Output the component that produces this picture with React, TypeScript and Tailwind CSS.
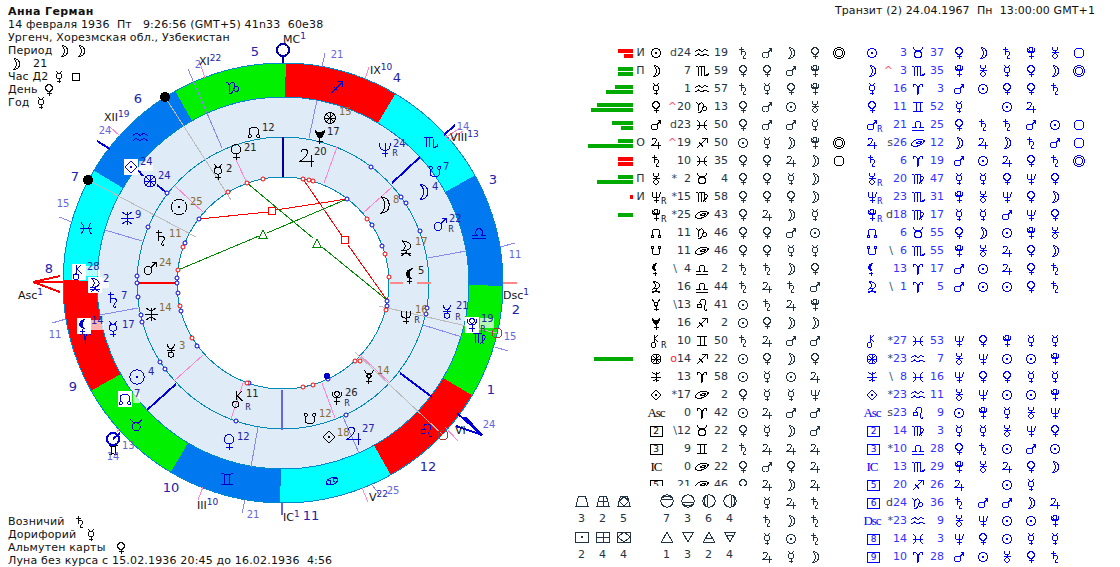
import React from 'react';

// glyph paths in a 16x16 box. c = circles [cx,cy,r], d = stroke path, f = filled path
type Gl = { d?: string; c?: number[][]; f?: string };
const G: Record<string, Gl> = {
  sun: { c: [[8, 8, 4.5]], f: 'M7.3 7.3h1.4v1.4h-1.4z' },
  moo: { d: 'M6 2.5C10 3 11.5 5.5 11.5 8C11.5 10.5 10 13 6 13.5C8 11.5 8.5 9.5 8.5 8C8.5 6.5 8 4.5 6 2.5' },
  mer: { c: [[8, 7, 2.7]], d: 'M5 2C5.8 3.5 6.5 4.3 8 4.3C9.5 4.3 10.2 3.5 11 2M8 9.7V14M6 12H10' },
  ven: { c: [[8, 6, 3.3]], d: 'M8 9.3V14M5.5 11.8H10.5' },
  mar: { c: [[6.5, 10, 3]], d: 'M8.7 7.8L12.5 4M9.5 3.5H12.8V7' },
  jup: { d: 'M4.5 5C4.5 2.8 8 2 8.3 5C8.5 7 6 9 4 10.5H12.5M10.5 7V14' },
  sat: { d: 'M6 2V10M4 4H8.5M6 8C7 6 10.5 6 10.5 8.5C10.5 10.5 8.5 11 8.5 12.5C8.5 13.5 9.5 14 10.5 13' },
  ura: { c: [[8, 11, 2.2]], d: 'M5 2.5C5.5 5 6.5 6 8 6C9.5 6 10.5 5 11 2.5M4.5 7.5H11.5M8 6V9' },
  nep: { d: 'M4 3V5C4 8 6 9 8 9C10 9 12 8 12 5V3M8 3V14M5.5 11.5H10.5' },
  plu: { c: [[8, 4.5, 2]], d: 'M4 3C4 6.5 6 8 8 8C10 8 12 6.5 12 3M8 8V14M5.5 11H10.5' },
  nod: { c: [[4.5, 11.5, 1.3], [11.5, 11.5, 1.3]], d: 'M5.2 10.4C3 8 3.5 4 8 4C12.5 4 13 8 10.8 10.4' },
  sno: { c: [[4.5, 4.5, 1.3], [11.5, 4.5, 1.3]], d: 'M5.2 5.6C3 8 3.5 12 8 12C12.5 12 13 8 10.8 5.6' },
  lil: { f: 'M9.5 2C6 2 4 4.5 4 6.5C4 9 6 10.5 9.5 10.5C8 9.5 7 8.2 7 6.5C7 4.8 8 3 9.5 2Z', d: 'M7 10.5V14.5M5 12.5H9' },
  sel: { d: 'M5 2.5C9 2.5 11.5 4.5 11.5 6.5C11.5 8.5 9 10 5 10C7 8.5 7.5 7.5 7.5 6.5C7.5 5 7 4 5 2.5M8 10V11M4 12H12M4.5 14L8 11L11.5 14' },
  me2: { d: 'M4.5 2.5C5 5 6.5 5.5 8 5.5C9.5 5.5 11 5 11.5 2.5M8 5.5L5.8 7L8 9.5L10.2 7L8 5.5M8 9.5V14M5.5 12H10.5' },
  bli: { f: 'M4 3C6 4.5 7 5 8 5C9 5 10 4.5 12 3C12 6 11 9 8 10C5 9 4 6 4 3Z', d: 'M8 10V14.5M5.5 12.5H10.5' },
  chi: { c: [[5.5, 12, 2.4]], d: 'M6 2V9M6 6L10 2M6.5 5.5L10.5 9.5' },
  for: { c: [[8, 8, 5]], d: 'M4.8 4.8L11.2 11.2M11.2 4.8L4.8 11.2M8 3V13M3 8H13' },
  ast: { d: 'M3 8H13M4.5 3.5C7 6 9 6 11.5 3.5M4.5 12.5C7 10 9 10 11.5 12.5M8 3V13' },
  dia: { d: 'M8 3L13 8L8 13L3 8Z', f: 'M7.4 7.4h1.2v1.2h-1.2z' },
  cir: { c: [[8, 8, 5]] },
  dbl: { c: [[8, 8, 5.5], [8, 8, 3.5]] },
  ari: { d: 'M8 13.5C8 8 7 3 4.5 3C3 3 3 5 4 6M8 13.5C8 8 9 3 11.5 3C13 3 13 5 12 6' },
  tau: { c: [[8, 9.5, 3.5]], d: 'M3 2.5C4 5 6 6 8 6C10 6 12 5 13 2.5' },
  gem: { d: 'M3 3C6 4 10 4 13 3M3 13C6 12 10 12 13 13M6 3.8V12.2M10 3.8V12.2' },
  can: { d: 'M1.5 9C4 5 9 3.5 14.5 5.5C13 10 7 12.5 1.5 10.5ZM6 8.5C8 6.5 10 6 11.5 7C10 9 8 9.5 6 8.5' },
  ca2: { c: [[5, 9, 1.8], [11, 7, 1.8]], d: 'M3.2 8.5C4 5.5 9 4 13 5.5M12.8 7.5C12 10.5 7 12 3 10.5' },
  leo: { c: [[5.5, 9, 2]], d: 'M6.8 7.5C5 5 6 2.5 9 2.5C12 2.5 12.5 5 11.5 7C10.5 9 10 11 10.5 12.5C11 13.7 12.5 13.7 13 12.5' },
  vir: { d: 'M2.5 4C3.5 3 4.5 3.5 4.5 5V12.5M4.5 5C5.5 3 7.5 3 7.5 5V12.5M7.5 5C8.5 3 10.5 3 10.5 5V10C10.5 12 11.5 13 12.5 13.5M10.5 6C12.5 4 14 6 13 8C12.5 9.5 11 11 9 12.5' },
  lib: { d: 'M2 13H14M2 10H6C4.5 8.5 4.5 4 8 4C11.5 4 11.5 8.5 10 10H14' },
  sco: { d: 'M2.5 4C3.5 3 4.5 3.5 4.5 5V12.5M4.5 5C5.5 3 7.5 3 7.5 5V12.5M7.5 5C8.5 3 10.5 3 10.5 5V11C10.5 13 12 13.5 14 11.5M14 9.5V11.5H12' },
  sag: { d: 'M3 13L13 3M8 3H13V8M5 7.5L9 11.5' },
  cap: { d: 'M2 4C3.5 3.5 4.5 5 4.5 7V12M4.5 7C5 4 8 3 9 5C9.5 6.5 9 9 8 11C7 13 5.5 14 4 14M9 8.5C10 7 13 7 13 9.5C13 12 10 12 8.5 10.5' },
  aqr: { d: 'M1.5 6.5L4.5 4.5L8 6.5L11 4.5L14.5 6.5M1.5 11L4.5 9L8 11L11 9L14.5 11' },
  pis: { d: 'M3.5 3C6.5 6 6.5 10 3.5 13M12.5 3C9.5 6 9.5 10 12.5 13M3 8H13' },
  tr1: { d: 'M2 13L4.5 3.5H11.5L14 13Z' },
  tr2: { d: 'M2 13L4.5 3.5H11.5L14 13ZM8 3.5V13M3.2 8.5H12.8' },
  tr3: { d: 'M2 13L4.5 3.5H11.5L14 13ZM8 3.5L12.8 8.5L8 13L3.2 8.5Z' },
  sq1: { d: 'M1.5 3H14.5V13H1.5Z', f: 'M7.4 7.4h1.2v1.2h-1.2z' },
  sq2: { d: 'M1.5 3H14.5V13H1.5ZM8 3V13M1.5 8H14.5' },
  sq3: { d: 'M1.5 3H14.5V13H1.5ZM8 3L14.5 8L8 13L1.5 8Z' },
  ci1: { c: [[8, 8, 6.2]], d: 'M2.5 6.5H13.5M4 4.5C6 3 10 3 12 4.5' },
  ci2: { c: [[8, 8, 6.2]], d: 'M2.5 9.5H13.5M4 11.5C6 13 10 13 12 11.5' },
  ci3: { c: [[8, 8, 6.2]], d: 'M6.5 2.5V13.5M4.5 4C3 6 3 10 4.5 12' },
  ci4: { c: [[8, 8, 6.2]], d: 'M9.5 2.5V13.5M11.5 4C13 6 13 10 11.5 12' },
  tu1: { d: 'M8 3L13.5 13H2.5Z' },
  td1: { d: 'M2.5 3H13.5L8 13Z' },
  tu2: { d: 'M8 3L13.5 13H2.5ZM5 9.5H11' },
  td2: { d: 'M2.5 3H13.5L8 13ZM5 6.5H11' },
};

function GPaths({ n }: { n: string }) {
  const g = G[n];
  return (
    <>
      {g.c?.map((c, i) => <circle key={i} cx={c[0]} cy={c[1]} r={c[2]} fill="none" stroke="currentColor" vectorEffect="non-scaling-stroke" />)}
      {g.d && <path d={g.d} fill="none" stroke="currentColor" vectorEffect="non-scaling-stroke" />}
      {g.f && <path d={g.f} fill="currentColor" />}
    </>
  );
}

function Ic({ n, s = 16 }: { n: string; s?: number }) {
  return (
    <svg width={s} height={s} viewBox="0 0 16 16" shapeRendering="crispEdges" className="shrink-0 inline-block">
      <GPaths n={n} />
    </svg>
  );
}

function Sym({ n }: { n: string }) {
  if (n === 'Asc' || n === 'Dsc' || n === 'IC')
    return <span className="text-[13px] tracking-[-1px] w-[16px] flex justify-center whitespace-nowrap font-['Liberation_Serif',serif]">{n}</span>;
  if (/^\d$/.test(n))
    return <span className="w-[13px] h-[11px] border border-current flex items-center justify-center text-[9px] leading-none">{n}</span>;
  if (n.endsWith('R'))
    return (
      <span className="relative flex">
        <Ic n={n.slice(0, 3)} />
        <span className="absolute left-[13px] top-[8px] text-[8px] leading-[9px]">R</span>
      </span>
    );
  return <Ic n={n} />;
}

const LEFT = [
  'sun|d|24|aqr|19|sat mar moo ven|dbl',
  'moo||7|sco|59|ven ven mar plu|',
  'mer||1|aqr|57|sat mer ven plu|',
  'ven|^|20|cap|13|ven mar sun ura|',
  'mar|d|23|pis|50|ven mar mar mer|',
  'jup|^|19|sag|50|sun mer moo plu|dbl',
  'sat||10|pis|35|ven ven jup moo|cir',
  'ura|*|2|tau|4|ven ven mer moo|',
  'nepR|*|15|vir|58|ven ven ven moo|',
  'pluR|*|25|can|43|ven jup moo mer|',
  'nod||11|cap|46|ven ven mar sun|',
  'sno||11|can|46|ven ven mer mer|',
  'lil|\\|4|lib|2|sat sat moo ven|',
  'sel||16|lib|44|sat jup sat mar|',
  'me2|\\|13|leo|41|sun sat jup plu|',
  'bli||16|sag|2|sun ven moo moo|',
  'chiR||10|gem|50|sat jup mar mar|',
  'for|o|14|sag|22|sun ven moo ven|',
  'ast||13|ari|58|sun mer sun jup|',
  'dia|*|17|can|2|ven mer mer nep|',
  'Asc||0|ari|42|sun jup mar mar|',
  '2|\\|12|tau|22|ven mer moo mar|',
  '3||9|gem|2|sat jup jup jup|',
  'IC||0|can|22|ven mar ven jup|',
  '5||21|can|46|ven jup moo jup|',
  '|||||_ mer jup sat|',
  '|||||_ sat moo sat|',
  '|||||_ mer sun sat|',
  '|||||_ jup mer moo|',
];

const RIGHT = [
  'sun||3|tau|37|ven moo sat plu ura cir',
  'moo|^|3|sco|35|plu ura mer ven moo dbl',
  'mer||16|ari|3|mar sun ven ven sat',
  'ven||11|gem|52|mer _ sun jup',
  'marR||21|lib|25|ven sat sat mar sun cir',
  'jup|s|26|can|12|moo jup moo sat mar cir',
  'sat||6|ari|19|mar sun jup ven sat dbl',
  'uraR||20|vir|47|mer mer ven nep ven',
  'nepR||23|sco|31|plu ura nep ven moo',
  'pluR|d|18|vir|17|mer mer mar nep ven',
  'nod||6|tau|55|ven moo sun plu ura',
  'sno|\\|6|sco|55|plu ura jup ven moo',
  'lil||13|ari|17|mar sun jup ven sat',
  'sel|\\|1|ari|5|mar sun sun ven sat',
  '|||||',
  '|||||',
  'chi|*|27|pis|53|nep ven plu mer mer',
  'for|*|23|aqr|7|ura nep sun sun plu',
  'ast|\\|8|pis|16|nep ven ven mer mer',
  'dia|*|23|aqr|11|ura nep sun sun plu',
  'Asc|s|23|leo|9|sun plu mer ura nep',
  '2||14|vir|3|mer mer ura nep ven',
  '3|*|10|lib|28|ven sat sun mar sun',
  'IC||13|sco|29|plu ura jup ven moo',
  '5||20|sag|26|jup _ sun mer',
  '6|d|24|cap|36|sat mar mar moo jup',
  'Dsc|*|23|aqr|9|ura nep sun sun plu',
  '8||14|pis|3|nep ven sun mer mer',
  '9||10|ari|28|mar sun ura ven sat',
];

// strength bars next to the left table: [top width, bottom width, colour, label]
const BARS: Record<number, [number, number, string, string]> = {
  0: [15, 9, '#ff0000', 'И'],
  1: [15, 15, '#00aa00', 'П'],
  2: [18, 27, '#00aa00', ''],
  3: [36, 42, '#00aa00', ''],
  4: [21, 12, '#00aa00', ''],
  5: [15, 45, '#00aa00', 'О'],
  6: [15, 15, '#ff0000', ''],
  7: [15, 36, '#00aa00', 'П'],
  8: [3, 0, '#ff0000', 'И'],
  9: [0, 15, '#00aa00', ''],
  17: [39, 0, '#00aa00', ''],
};

const markCol: Record<string, string> = { '^': 'text-[#ff5577]', o: 'text-[#ff2233]', d: 'text-[#444444]', s: 'text-[#444444]', '*': 'text-[#334466]', '\\': 'text-[#335577]' };

function Rulers({ list }: { list: string[] }) {
  return (
    <>
      {list.map((r, i) => (
        <span key={i} className="flex justify-center">{r && r !== '_' ? <Ic n={r} /> : null}</span>
      ))}
    </>
  );
}

function LeftTable() {
  return (
    <div className="grid grid-cols-[63px_15px_16px_13px_14px_21px_19px_repeat(5,24px)] auto-rows-[18px] items-center text-[#223344] text-[11px] leading-[18px]">
      {LEFT.map((row, i) => {
        const [pl, mk, deg, sign, min, rul, ext] = row.split('|');
        const b = BARS[i];
        const rulers = rul.split(' ');
        return (
          <React.Fragment key={i}>
            <div className="flex flex-col items-end gap-px">
              {b && b[0] > 0 && <div className="h-[4px]" style={{ width: b[0], background: b[2] }} />}
              {b && b[1] > 0 && <div className="h-[4px]" style={{ width: b[1], background: b[2] }} />}
            </div>
            <span className="text-center">{b ? b[3] : ''}</span>
            <span className="flex justify-center text-black">{pl && <Sym n={pl} />}</span>
            <span className={`text-right ${markCol[mk] || ''}`}>{mk}</span>
            <span className="text-right">{deg}</span>
            <span className="flex justify-center text-black">{sign && <Ic n={sign} />}</span>
            <span className="text-right pr-[3px]">{min}</span>
            <Rulers list={rulers} />
            <span className="flex justify-center text-black">{ext && <Ic n={ext} />}</span>
          </React.Fragment>
        );
      })}
    </div>
  );
}

function RightTable() {
  return (
    <div className="grid grid-cols-[29px_13px_14px_22px_18px_repeat(6,24px)] auto-rows-[18px] items-center text-[#3333ff] text-[11px] leading-[18px]">
      {RIGHT.map((row, i) => {
        const [pl, mk, deg, sign, min, rul] = row.split('|');
        const rulers = (rul || '').split(' ');
        while (rulers.length < 6) rulers.push('_');
        return (
          <React.Fragment key={i}>
            <span className="flex justify-end text-[#0000ff]">{pl && <Sym n={pl} />}</span>
            <span className={`text-right ${markCol[mk] || ''}`}>{mk}</span>
            <span className="text-right">{deg}</span>
            <span className="flex justify-center text-[#0000ff]">{sign && <Ic n={sign} />}</span>
            <span className="text-right pr-[3px]">{min}</span>
            <span className="contents text-[#0000ff]"><Rulers list={rulers} /></span>
          </React.Fragment>
        );
      })}
    </div>
  );
}

function Legend() {
  const top = ['tr1', 'tr2', 'tr3'], topN = [3, 2, 5], bot = ['sq1', 'sq2', 'sq3'], botN = [2, 4, 4];
  const ctop = ['ci1', 'ci2', 'ci3', 'ci4'], ctopN = [7, 3, 6, 4], cbot = ['tu1', 'td1', 'tu2', 'td2'], cbotN = [1, 3, 2, 4];
  const Block = ({ a, an, b, bn }: { a: string[]; an: number[]; b: string[]; bn: number[] }) => (
    <div className="grid grid-flow-col grid-rows-[17px_18px_20px_14px] auto-cols-[21px] justify-items-center items-center text-[11px] text-[#223344]">
      {a.map((g, i) => (
        <React.Fragment key={g}>
          <Ic n={g} />
          <span>{an[i]}</span>
          <Ic n={b[i]} />
          <span>{bn[i]}</span>
        </React.Fragment>
      ))}
    </div>
  );
  return (
    <div className="absolute left-0 top-[486px] w-[187px] h-[81px] bg-white flex gap-[22px] pl-[1px] pt-[6px] text-black">
      <Block a={top} an={topN} b={bot} bn={botN} />
      <Block a={ctop} an={ctopN} b={cbot} bn={cbotN} />
    </div>
  );
}

// ---- chart ----
const CX = 283, CY = 283;
function sector(i: number) {
  const r1 = 220, r0 = 186;
  const a0 = ((180 + i * 30 - 0.7) * Math.PI) / 180, a1 = ((180 + (i + 1) * 30 - 0.7) * Math.PI) / 180;
  const p = (r: number, a: number) => `${CX + r * Math.cos(a)} ${CY - r * Math.sin(a)}`;
  return `M${p(r1, a0)}A${r1} ${r1} 0 0 0 ${p(r1, a1)}L${p(r0, a1)}A${r0} ${r0} 0 0 1 ${p(r0, a0)}Z`;
}
const SECT = ['#ff0000', '#00f000', '#0078f0', '#00ffff'];
const LAV = [[188, 69, 222, 148], [59, 217, 72, 222], [105, 230, 142, 241], [325, 53, 322, 67], [317, 100, 309, 138], [515, 243, 500, 247], [466, 251, 428, 258], [52, 323, 66, 319], [100, 315, 138, 308], [242, 513, 245, 500], [251, 467, 258, 427], [423, 325, 462, 337], [495, 347, 508, 351], [343, 417, 359, 453], [372, 485, 380, 495]];
const PINK = [[110, 127, 120, 136], [175, 186, 204, 213], [236, 160, 247, 183], [200, 63, 205, 78], [369, 67, 365, 79], [337, 147, 324, 183], [392, 187, 363, 213], [460, 128, 445, 138], [463, 131, 448, 141], [203, 355, 174, 381], [243, 383, 231, 419], [203, 487, 198, 500], [117, 432, 120, 428], [360, 355, 390, 383], [322, 383, 335, 418], [445, 427, 458, 441], [362, 488, 368, 502]];
const GREY = [[88, 180, 196, 237], [165, 97, 231, 200], [355, 352, 443, 435], [379, 306, 497, 333]];
const THICK = [[97, 141, 110, 149], [138, 170, 143, 176], [157, 185, 167, 193], [392, 183, 420, 157], [444, 135, 455, 125], [400, 373, 432, 397], [147, 410, 176, 384], [120, 433, 113, 439], [457, 413, 482, 435], [465, 417, 482, 435], [456, 426, 482, 435]];
const BLUE_DOTS = [[199, 219], [185, 243], [177, 278], [177, 283], [178, 293], [137, 276], [137, 283], [138, 297], [148, 227], [167, 193], [181, 311], [197, 346], [141, 315], [142, 322], [160, 362], [165, 369], [249, 383], [236, 421], [347, 199], [371, 167], [401, 197], [406, 203], [420, 231], [372, 225], [382, 246], [387, 301], [387, 306], [427, 308], [426, 314], [328, 379], [346, 415]];
const RED_DOTS = [[247, 183], [263, 179], [228, 192], [183, 247], [178, 270], [180, 306], [192, 338], [247, 383], [303, 179], [309, 180], [313, 181], [367, 219], [385, 254], [389, 277], [386, 310], [360, 361], [355, 361], [313, 385], [303, 387]];

type Gp = [string, number, number, number, string, string?, number?, number?, string?, boolean?];
const BK = '#000000', BL = '#0000dd', BR = '#8a6a30', DK = '#222222', NB = '#2222aa';
const GLYPHS: Gp[] = [
  ['nod', 254, 132, 1.2, BK, '12', 261, 132, DK], ['ven', 236, 152, 1.4, BK, '21', 243, 152, DK], ['mer', 218, 172, 1.3, BK, '2', 225, 173, DK],
  ['sun', 179, 207, 1.7, BK, '25', 189, 206, BR], ['sat', 161, 238, 1.3, BK, '11', 168, 238, BR], ['mar', 150, 268, 1.3, BK, '24', 158, 267, BR],
  ['ast', 127, 218, 1.3, BL, '9', 134, 219, NB], ['dia', 131, 167, 1.2, BL, '24', 139, 166, NB, true], ['for', 150, 181, 1.2, BL, '24', 157, 180, NB],
  ['chi', 79, 272, 1.2, BL, '28', 86, 271, NB, true], ['sel', 95, 285, 1.2, BL, '2', 102, 283, NB, true], ['sat', 113, 300, 1.3, BL, '7', 120, 300, NB],
  ['for', 330, 118, 1.1, BK, '15', 338, 116, BR], ['bli', 320, 136, 1.2, BK, '17', 326, 136, DK], ['jup', 307, 157, 1.6, BK, '20', 313, 156, DK],
  ['nep', 385, 149, 1.3, BL, '24', 392, 148, NB], ['sno', 435, 172, 1.2, BL, '7', 442, 171, NB], ['moo', 423, 192, 1.4, BL, '4', 431, 191, NB],
  ['moo', 384, 205, 1.5, BK, '8', 392, 204, BR], ['mar', 440, 224, 1.3, BL, '22', 448, 223, NB], ['sel', 406, 248, 1.3, BK, '17', 414, 246, BR], ['lil', 411, 276, 1.3, BK, '5', 417, 275, DK],
  ['nep', 406, 317, 1.2, BK, '16', 414, 314, BR], ['ura', 447, 312, 1.2, BL, '21', 455, 310, NB], ['plu', 472, 325, 1.2, BL, '19', 480, 323, NB, true],
  ['me2', 369, 377, 1.2, BK, '14', 376, 375, BR], ['plu', 337, 398, 1.2, BK, '26', 344, 397, DK], ['sno', 310, 419, 1.2, BK, '12', 318, 418, BR],
  ['dia', 329, 437, 1.2, BK, '18', 336, 437, BR], ['jup', 354, 435, 1.6, BL, '27', 361, 433, NB],
  ['lil', 84, 326, 1.2, BL, '14', 90, 325, NB, true], ['mer', 113, 329, 1.3, BL, '17', 121, 329, NB], ['ast', 151, 314, 1.3, BK, '14', 158, 312, BR],
  ['ura', 171, 351, 1.2, BK, '3', 178, 350, BR], ['sun', 137, 377, 1.6, BL, '4', 147, 376, NB], ['nod', 125, 399, 1.2, BL, '7', 133, 398, NB, true],
  ['chi', 239, 399, 1.3, BK, '11', 245, 398, DK], ['ven', 229, 442, 1.4, BL, '12', 236, 441, NB],
];
const SIGNS: [string, number, number][] = [['aqr', 140, 137], ['cap', 233, 87], ['pis', 86, 228], ['sag', 337, 87], ['sco', 430, 142], ['lib', 479, 233], ['vir', 479, 338], ['leo', 426, 430], ['ca2', 332, 481], ['gem', 227, 479], ['tau', 136, 425], ['ari', 85, 337]];
const HOUSES: [string, number, number][] = [['5', 255, 52], ['6', 138, 99], ['7', 75, 177], ['8', 49, 269], ['9', 73, 387], ['10', 171, 488], ['11', 311, 516], ['12', 428, 467], ['1', 491, 390], ['2', 516, 310], ['3', 493, 180], ['4', 397, 78]];
const ROMAN: [string, string, number, number][] = [['XI', '22', 199, 62], ['XII', '19', 104, 118], ['IX', '10', 370, 71], ['VIII', '13', 450, 138], ['III', '10', 197, 506], ['V', '22', 369, 498], ['VI', '', 455, 431], ['MC', '1', 283, 40], ['IC', '1', 283, 518], ['Asc', '1', 18, 296], ['Dsc', '1', 503, 296]];
const SMALL: [string, number, number][] = [['21', 337, 55], ['15', 63, 204], ['24', 105, 131], ['11', 55, 335], ['14', 113, 457], ['21', 253, 515], ['11', 515, 255], ['15', 510, 337], ['24', 489, 425], ['14', 463, 127], ['2', 198, 65], ['25', 393, 491], ['R', 395, 153], ['R', 451, 229], ['R', 417, 320], ['R', 458, 317], ['R', 483, 329], ['R', 347, 403], ['R', 248, 407]];

function Chart() {
  return (
    <svg width={570} height={567} className="absolute left-0 top-0 text-[10px]" shapeRendering="crispEdges">
      <circle cx={CX} cy={CY} r={186} fill="#e0ebf8" />
      {Array.from({ length: 12 }, (_, i) => <path key={i} d={sector(i)} fill={SECT[i % 4]} />)}
      <circle cx={CX} cy={CY} r={220} fill="none" stroke="#0088cc" />
      <circle cx={CX} cy={CY} r={186} fill="none" stroke="#0088cc" />
      <circle cx={CX} cy={CY} r={146} fill="none" stroke="#0088bb" />
      <circle cx={CX} cy={CY} r={106} fill="#ffffff" stroke="#0088bb" />
      {LAV.map((l, i) => <line key={i} x1={l[0]} y1={l[1]} x2={l[2]} y2={l[3]} stroke="#8888ee" />)}
      {PINK.map((l, i) => <line key={i} x1={l[0]} y1={l[1]} x2={l[2]} y2={l[3]} stroke="#ff88cc" />)}
      {GREY.map((l, i) => <line key={i} x1={l[0]} y1={l[1]} x2={l[2]} y2={l[3]} stroke="#bbbbbb" />)}
      {THICK.map((l, i) => <line key={i} x1={l[0]} y1={l[1]} x2={l[2]} y2={l[3]} stroke="#0000dd" strokeWidth={2} />)}
      <line x1={390} y1={283} x2={403} y2={283} stroke="#ff8888" strokeWidth={2} />
      <line x1={417} y1={283} x2={431} y2={283} stroke="#ff8888" strokeWidth={2} />
      <line x1={503} y1={283} x2={517} y2={283} stroke="#ff8888" strokeWidth={2} />
      <line x1={283} y1={137} x2={283} y2={177} stroke="#000099" strokeWidth={2} />
      <line x1={283} y1={57} x2={283} y2={63} stroke="#000099" strokeWidth={2} />
      <line x1={282} y1={390} x2={282} y2={430} stroke="#6666dd" strokeWidth={2} />
      <line x1={282} y1={503} x2={282} y2={515} stroke="#6666dd" strokeWidth={2} />
      <line x1={137} y1={283} x2={177} y2={283} stroke="#ff0000" strokeWidth={2} />
      <path d="M63 282H33L60 276M33 282L60 292" fill="none" stroke="#ff0000" strokeWidth={2} />
      {/* aspects */}
      <path d="M199 219L268 212M276 210L347 199M303 179L342 236M348 245L387 300" fill="none" stroke="#ff0000" />
      <path d="M178 270L259 236M267 233L347 199M247 183L313 238M322 247L387 300" fill="none" stroke="#008800" />
      <rect x={268} y={207} width={7} height={7} fill="#ffffff" stroke="#ff0000" />
      <rect x={341} y={236} width={7} height={7} fill="#ffffff" stroke="#ff0000" />
      <path d="M263 230L267 238H259Z M317 239L321 247H313Z" fill="#ffffff" stroke="#008800" />
      {BLUE_DOTS.map((d, i) => <circle key={i} cx={d[0]} cy={d[1]} r={2} fill="#ffffff" stroke="#0000cc" shapeRendering="auto" />)}
      {RED_DOTS.map((d, i) => <circle key={i} cx={d[0]} cy={d[1]} r={2} fill="#ffffff" stroke="#ee0000" shapeRendering="auto" />)}
      <circle cx={88} cy={180} r={5} fill="#000000" />
      <circle cx={165} cy={97} r={5} fill="#000000" />
      <circle cx={327} cy={376} r={3} fill="#0000cc" />
      <circle cx={497} cy={333} r={5} fill="none" stroke="#aa3333" />
      <circle cx={443} cy={435} r={5} fill="none" stroke="#aa3333" />
      <circle cx={283} cy={50} r={6} fill="none" stroke="#0000aa" strokeWidth={2} />
      <circle cx={113} cy={439} r={6} fill="none" stroke="#0000dd" strokeWidth={2} />
      {SIGNS.map(([n, x, y]) => (
        <g key={n} transform={`translate(${x - 9} ${y - 9}) scale(1.15)`} className="text-[#0000cc]"><GPaths n={n} /></g>
      ))}
      <g transform="translate(106 443) scale(0.9)" className="text-[#000000]"><GPaths n="gem" /></g>
      {GLYPHS.map(([n, x, y, s, col, lab, lx, ly, lc, wbg], i) => (
        <g key={i}>
          {wbg && <rect x={x - 7} y={y - 8} width={14} height={16} fill="#ffffff" />}
          {wbg && <rect x={lx!} y={ly! - 5} width={lab!.length * 7} height={10} fill="#ffffff" opacity={0.7} />}
          <g transform={`translate(${x - 8 * s} ${y - 8 * s}) scale(${s})`} style={{ color: col }}><GPaths n={n} /></g>
          {lab && <text x={lx! + 1} y={ly! - 1} fill={lc} shapeRendering="auto">{lab}</text>}
        </g>
      ))}
      {SMALL.map(([t, x, y], i) => (
        <text key={i} x={x} y={y} textAnchor="middle" dominantBaseline="middle" fill={t === 'R' ? '#222266' : '#6666dd'} className={t === 'R' ? 'text-[8px]' : 'text-[10px]'}>{t}</text>
      ))}
      {HOUSES.map(([t, x, y]) => (
        <text key={t} x={x} y={y} textAnchor="middle" dominantBaseline="middle" fill="#2222aa" className="text-[13px]">{t}</text>
      ))}
      {ROMAN.map(([t, sup, x, y], i) => (
        <text key={i} x={x} y={y} dominantBaseline="middle" fill="#111111" className="text-[11px]">
          {t}
          {sup && <tspan dy={-4} fill="#2222aa" className="text-[9px]">{sup}</tspan>}
        </text>
      ))}
      <text x={122} y={449} fill="#6666bb" className="text-[10px]">13</text>
    </svg>
  );
}

export default function App() {
  return (
    <div className="flex w-[1120px] h-[567px] overflow-hidden bg-white text-[#111111] text-[11px] leading-[13px] font-['DejaVu_Sans',sans-serif]">
      <div className="relative w-[570px] shrink-0">
        <Chart />
        <div className="relative flex flex-col justify-between h-full pl-2 pt-[5px] tracking-[0.17px]">
          <div>
            <div className="font-bold tracking-[0.4px]">Анна Герман</div>
            <div className="whitespace-pre">14 февраля 1936  Пт   9:26:56 (GMT+5) 41n33  60e38</div>
            <div>Ургенч, Хорезмская обл., Узбекистан</div>
            <div className="flex items-center h-[13px] gap-[1px]">Период <span className="w-[1px]" /><Ic n="moo" /><Ic n="moo" /></div>
            <div className="flex items-center h-[13px]"><Ic n="moo" /><span className="ml-[9px]">21</span></div>
            <div className="flex items-center h-[13px] gap-[3px]">Час Д2 <Ic n="mer" /><span className="w-[8px] h-[8px] border border-black ml-[2px]" /></div>
            <div className="flex items-center h-[13px] gap-[3px]">День <Ic n="ven" /></div>
            <div className="flex items-center h-[13px] gap-[3px]">Год <Ic n="mer" /></div>
          </div>
          <div>
            <div className="flex items-center h-[13px] gap-[7px]">Возничий <Ic n="sat" /></div>
            <div className="flex items-center h-[13px] gap-[7px]">Дорифорий <Ic n="mer" /></div>
            <div className="flex items-center h-[13px] gap-[7px]">Альмутен карты <Ic n="ven" /></div>
            <div className="whitespace-pre">Луна без курса с 15.02.1936 20:45 до 16.02.1936  4:56</div>
          </div>
        </div>
      </div>
      <div className="relative flex-1">
        <div className="h-[44px] pt-[4px] pr-[25px] text-right whitespace-pre tracking-[0.1px]">Транзит (2) 24.04.1967  Пн  13:00:00 GMT+1</div>
        <div className="flex">
          <LeftTable />
          <RightTable />
        </div>
        <Legend />
      </div>
    </div>
  );
}
